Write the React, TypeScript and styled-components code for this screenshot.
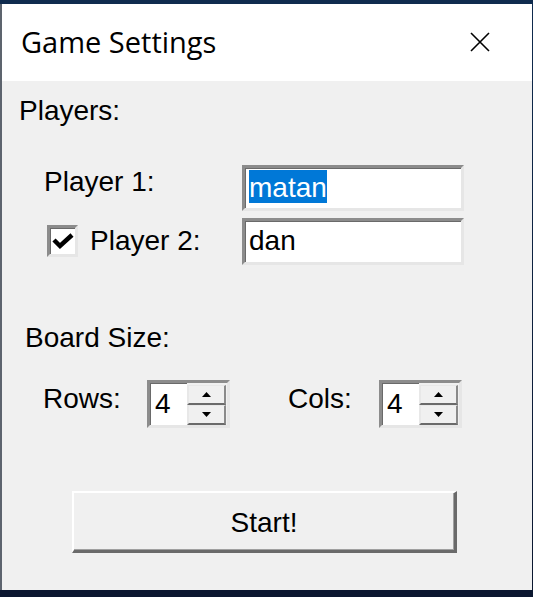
import React from "react";
import styled, { createGlobalStyle } from "styled-components";

const Global = createGlobalStyle`
  html, body { margin: 0; padding: 0; }
  body {
    background: #0d1d36;
    width: 533px;
    height: 597px;
    overflow: hidden;
    font-family: "Liberation Sans", Arial, sans-serif;
  }
`;

const Screen = styled.div`
  width: 533px;
  height: 597px;
  box-sizing: border-box;
  padding: 4px 1px 7px 0;
  display: flex;
  background: linear-gradient(#0f2b4e 0, #0f2b4e 4px, #0b1730 590px);
`;

const Window = styled.div`
  flex: 1;
  display: flex;
  flex-direction: column;
  border-left: 2px solid #5d646e;
  background: #f0f0f0;
`;

const TitleBar = styled.div`
  height: 77px;
  background: #ffffff;
  display: flex;
  align-items: flex-start;
  padding-left: 19px;
  box-sizing: border-box;
`;

const Title = styled.div`
  flex: 1;
  margin-top: 20px;
  font-family: "Segoe UI", "Open Sans", "Noto Sans", sans-serif;
  font-size: 29px;
  line-height: 36px;
  color: #000;
`;

const Close = styled.div`
  width: 20px;
  height: 20px;
  margin-top: 28px;
  margin-right: 42px;
  display: flex;
`;

const Body = styled.div`
  flex: 1;
  display: flex;
  flex-direction: column;
  background: #f0f0f0;
  color: #000;
  font-size: 28px;
`;

const SectionLabel = styled.div<{ $top: number; $left: number }>`
  margin-top: ${(p) => p.$top}px;
  padding-left: ${(p) => p.$left}px;
  line-height: 30px;
  height: 30px;
`;

const PlayerRow = styled.div<{ $top: number; $height: number }>`
  margin-top: ${(p) => p.$top}px;
  height: ${(p) => p.$height}px;
  display: flex;
  align-items: flex-start;
`;

const LabelCell = styled.div<{ $left: number }>`
  width: 240px;
  box-sizing: border-box;
  padding-left: ${(p) => p.$left}px;
  display: flex;
  align-items: flex-start;
`;

const Label = styled.span<{ $top: number; $width?: number; $gap?: number }>`
  display: block;
  margin-top: ${(p) => p.$top}px;
  margin-left: ${(p) => p.$gap ?? 0}px;
  width: ${(p) => (p.$width ? `${p.$width}px` : "auto")};
  flex: none;
  line-height: 30px;
  white-space: nowrap;
`;

const sunken = `
  box-sizing: border-box;
  border-style: solid;
  border-width: 3px;
  border-color: #8c8c8c #e6e6e6 #e6e6e6 #8c8c8c;
  box-shadow: inset 1px 1px 0 #6a6a6a;
  background: #ffffff;
`;

const TextBox = styled.div`
  ${sunken}
  width: 222px;
  height: 100%;
  padding: 2px 0 0 4px;
  line-height: 30px;
  white-space: nowrap;
`;

const TextValue = styled.span<{ $selected?: boolean }>`
  display: inline-block;
  padding-top: 3px;
  line-height: 30px;
  background: ${(p) => (p.$selected ? "#0078d7" : "transparent")};
  color: ${(p) => (p.$selected ? "#ffffff" : "#000000")};
`;

const CheckBox = styled.div`
  ${sunken}
  width: 31px;
  height: 32px;
  margin-top: 7px;
  flex: none;
  display: flex;
  align-items: center;
  justify-content: center;
`;

const SpinRow = styled.div`
  margin-top: 27px;
  height: 48px;
  display: flex;
  align-items: flex-start;
  padding-left: 41px;
`;

const Spin = styled.div`
  ${sunken}
  width: 83px;
  height: 48px;
  display: flex;
  flex: none;
`;

const SpinValue = styled.div`
  width: 37px;
  padding: 3px 0 0 5px;
  box-sizing: border-box;
  line-height: 36px;
`;

const SpinButtons = styled.div`
  flex: 1;
  display: flex;
  flex-direction: column;
  background: #f0f0f0;
  padding: 2px 1px 0 0;
`;

const SpinButton = styled.div`
  flex: 1;
  box-sizing: border-box;
  border-style: solid;
  border-width: 1px 2px 2px 2px;
  border-color: #e8e8e8 #8a8a8a #6a6a6a #e8e8e8;
  background: #f0f0f0;
  display: flex;
  align-items: center;
  justify-content: center;
`;

const StartButton = styled.div`
  margin-top: 63px;
  margin-left: 70px;
  width: 385px;
  height: 62px;
  box-sizing: border-box;
  border-style: solid;
  border-width: 2px 3px 3px 2px;
  border-color: #ffffff #6a6a6a #6a6a6a #ffffff;
  box-shadow: inset -1px -1px 0 #a0a0a0;
  background: #f0f0f0;
  display: flex;
  align-items: center;
  justify-content: center;
  line-height: 30px;
  padding-top: 2px;
`;

const Arrow = ({ down }: { down?: boolean }) => (
  <svg width="9" height="5" viewBox="0 0 9 5">
    <polygon points={down ? "0,0 9,0 4.5,5" : "0,5 9,5 4.5,0"} fill="#000" />
  </svg>
);

const SpinBox = ({ value }: { value: string }) => (
  <Spin>
    <SpinValue>{value}</SpinValue>
    <SpinButtons>
      <SpinButton>
        <Arrow />
      </SpinButton>
      <SpinButton>
        <Arrow down />
      </SpinButton>
    </SpinButtons>
  </Spin>
);

export default function App() {
  return (
    <>
      <Global />
      <Screen>
        <Window>
          <TitleBar>
            <Title>Game Settings</Title>
            <Close>
              <svg width="20" height="20" viewBox="0 0 20 20">
                <path d="M1 1 L19 19 M19 1 L1 19" stroke="#000" strokeWidth="1.6" fill="none" />
              </svg>
            </Close>
          </TitleBar>
          <Body>
            <SectionLabel $top={15} $left={17}>Players:</SectionLabel>
            <PlayerRow $top={39} $height={46}>
              <LabelCell $left={42}>
                <Label $top={2}>Player 1:</Label>
              </LabelCell>
              <TextBox>
                <TextValue $selected>matan</TextValue>
              </TextBox>
            </PlayerRow>
            <PlayerRow $top={7} $height={47}>
              <LabelCell $left={45}>
                <CheckBox>
                  <svg width="22" height="18" viewBox="0 0 22 18">
                    <path d="M2 8 L8 14 L20 3" stroke="#000" strokeWidth="4.5" fill="none" strokeLinejoin="miter" />
                  </svg>
                </CheckBox>
                <Label $top={8} $gap={12}>Player 2:</Label>
              </LabelCell>
              <TextBox>
                <TextValue>dan</TextValue>
              </TextBox>
            </PlayerRow>
            <SectionLabel $top={58} $left={23}>Board Size:</SectionLabel>
            <SpinRow>
              <Label $top={4} $width={104}>Rows:</Label>
              <SpinBox value="4" />
              <Label $top={4} $width={91} $gap={58}>Cols:</Label>
              <SpinBox value="4" />
            </SpinRow>
            <StartButton>Start!</StartButton>
          </Body>
        </Window>
      </Screen>
    </>
  );
}
